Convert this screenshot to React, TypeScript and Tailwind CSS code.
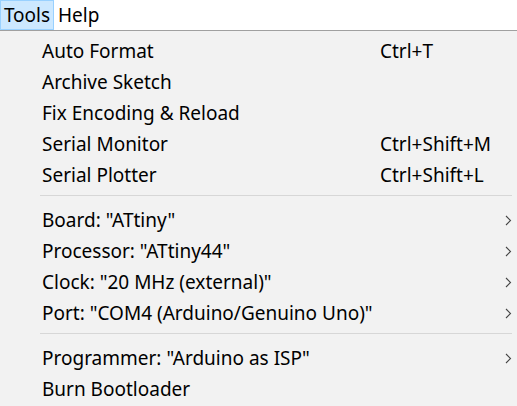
import React from 'react';

type Item = { label: string; shortcut?: string; sub?: boolean };

const groups: Item[][] = [
  [
    { label: 'Auto Format', shortcut: 'Ctrl+T' },
    { label: 'Archive Sketch' },
    { label: 'Fix Encoding & Reload' },
    { label: 'Serial Monitor', shortcut: 'Ctrl+Shift+M' },
    { label: 'Serial Plotter', shortcut: 'Ctrl+Shift+L' },
  ],
  [
    { label: 'Board: "ATtiny"', sub: true },
    { label: 'Processor: "ATtiny44"', sub: true },
    { label: 'Clock: "20 MHz (external)"', sub: true },
    { label: 'Port: "COM4 (Arduino/Genuino Uno)"', sub: true },
  ],
  [
    { label: 'Programmer: "Arduino as ISP"', sub: true },
    { label: 'Burn Bootloader' },
  ],
];

function Chevron() {
  return (
    <svg width="7" height="11" viewBox="0 0 7 11" className="text-[#444]">
      <path d="M1 1 L5.5 5.5 L1 10" fill="none" stroke="currentColor" strokeWidth="1.1" />
    </svg>
  );
}

function Row({ item }: { item: Item }) {
  return (
    <div className="flex h-[31px] items-center pl-[42px] text-black">
      <span className="w-[338px] shrink-0 whitespace-nowrap">{item.label}</span>
      <span className="flex-1 whitespace-nowrap">{item.shortcut}</span>
      <span className="flex w-[12px] justify-start">{item.sub && <Chevron />}</span>
    </div>
  );
}

export default function App() {
  return (
    <div
      className="h-[406px] w-[517px] overflow-hidden bg-[#f2f2f2] text-[19px] leading-none"
      style={{ fontFamily: '"Segoe UI", "Noto Sans", "Open Sans", sans-serif' }}
    >
      <div className="flex h-[31px] items-stretch border-b border-[#a0a0a0] bg-white">
        <div className="flex w-[54px] items-center justify-center border border-[#99d1ff] bg-[#cce8ff]">Tools</div>
        <div className="flex items-center pl-[4px]">Help</div>
      </div>
      <div className="pt-[5px]">
        {groups.map((g, i) => (
          <div key={i}>
            {i > 0 && (
              <div className="pb-[9px] pt-[4px] pl-[40px] pr-[5px]">
                <div className="h-px bg-[#d7d7d7]" />
              </div>
            )}
            {g.map((item) => (
              <Row key={item.label} item={item} />
            ))}
          </div>
        ))}
      </div>
    </div>
  );
}
